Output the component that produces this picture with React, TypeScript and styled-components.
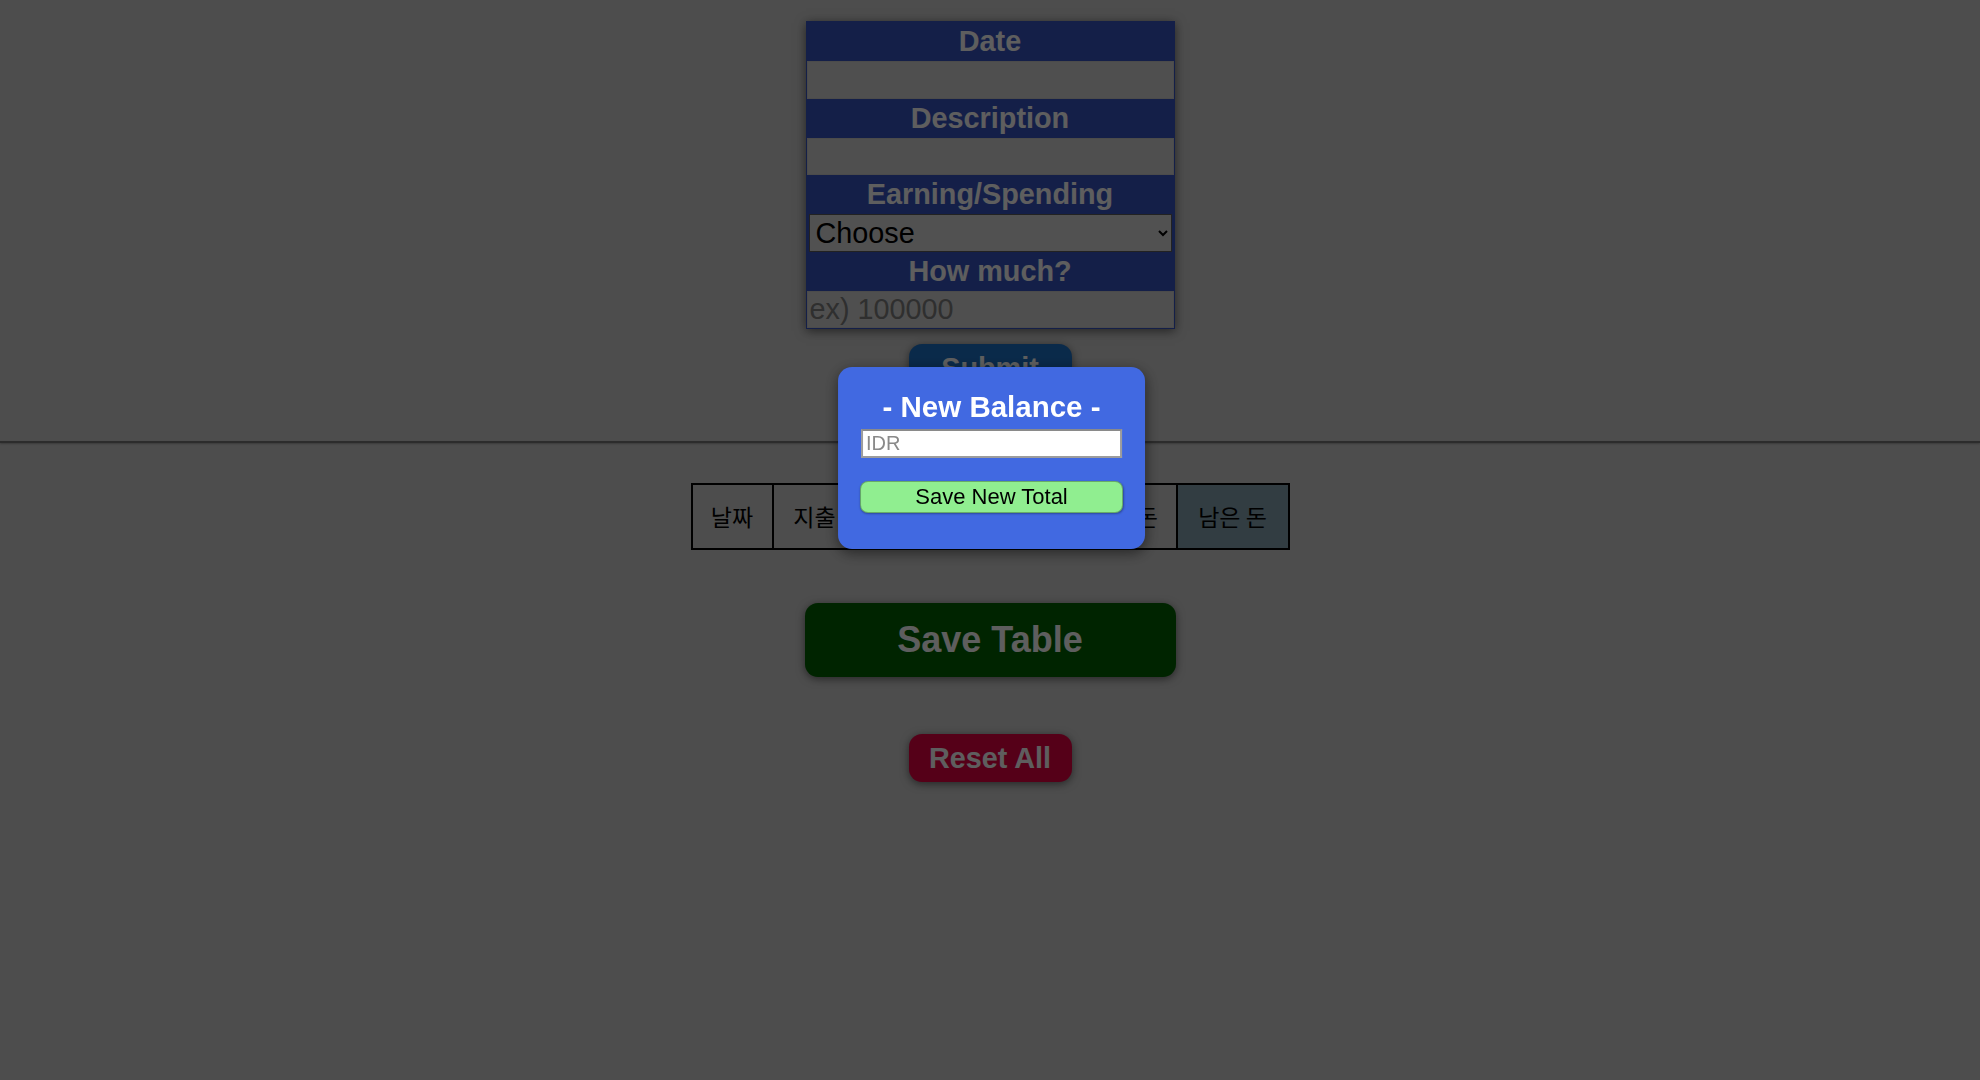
import React from "react";
import styled, { createGlobalStyle } from "styled-components";

const GlobalStyle = createGlobalStyle`
  html, body {
    margin: 0;
    padding: 0;
    background: #c0c0c0;
    font-family: "Liberation Sans", Arial, "Noto Sans CJK KR", sans-serif;
  }
  * { box-sizing: border-box; }
`;

const Page = styled.main`
  display: flex;
  flex-direction: column;
  align-items: center;
  padding-top: 21px;
  min-height: 100vh;
`;

const FormCard = styled.form`
  width: 369px;
  display: flex;
  flex-direction: column;
  border: 1px solid #344eb4;
  background: #344eb4;
  box-shadow: 0 2px 10px rgba(0, 0, 0, 0.55);
`;

const FieldLabel = styled.label`
  display: block;
  height: 39px;
  line-height: 39px;
  text-align: center;
  color: #ececec;
  font-weight: bold;
  font-size: 28.8px;
`;

const TextField = styled.input`
  display: block;
  width: 100%;
  height: 37.5px;
  margin: 0;
  padding: 1px 2px;
  border: 1px solid #bcbcbc;
  background: #c6c6c6;
  font-family: "Liberation Sans", Arial, sans-serif;
  font-size: 28.8px;
  color: #000;
  &::placeholder { color: #757575; }
  outline: none;
`;

const SelectField = styled.select`
  display: block;
  width: calc(100% - 4px);
  height: 37.5px;
  margin: 0 2px;
  padding: 0 2px;
  border: 1px solid #555;
  background: #cacaca;
  font-family: "Liberation Sans", Arial, sans-serif;
  font-size: 28.8px;
  color: #000;
`;

const PillButton = styled.button<{ $bg: string; $w: number; $h: number; $size: number; $mt: number }>`
  width: ${(p) => p.$w}px;
  height: ${(p) => p.$h}px;
  margin-top: ${(p) => p.$mt}px;
  border: none;
  border-radius: 13px;
  background: ${(p) => p.$bg};
  color: #ececec;
  font-family: "Liberation Sans", Arial, sans-serif;
  font-weight: bold;
  font-size: ${(p) => p.$size}px;
  box-shadow: 0 2px 8px rgba(0, 0, 0, 0.5);
  cursor: pointer;
`;

const Divider = styled.hr`
  align-self: stretch;
  width: 100%;
  height: 0;
  margin: 49px 0 0;
  border: 0;
  border-top: 2px solid #6e6e6e;
  box-shadow: 0 1px 2px rgba(0, 0, 0, 0.25);
`;

const LedgerTable = styled.table`
  margin-top: 40px;
  width: 597px;
  table-layout: fixed;
  border-collapse: collapse;
  border: 2px solid #000;
`;

const Col = styled.col<{ $w: number }>`
  width: ${(p) => p.$w}px;
`;

const HeadCell = styled.th<{ $accent?: boolean }>`
  border: 2px solid #000;
  padding: 16px 0;
  line-height: 31px;
  font-family: "Noto Sans CJK KR", "Liberation Sans", sans-serif;
  font-size: 23px;
  font-weight: normal;
  color: #000;
  white-space: nowrap;
  text-align: center;
  background: ${(p) => (p.$accent ? "#7d9aa5" : "transparent")};
`;

const Overlay = styled.div`
  position: fixed;
  inset: 0;
  background: rgba(0, 0, 0, 0.6);
  z-index: 10;
`;

const Modal = styled.div`
  position: fixed;
  top: 367px;
  left: 50%;
  transform: translateX(-49.5%);
  width: 307px;
  padding: 23px 23px 36px;
  background: #4169e1;
  border-radius: 14px;
  box-shadow: 0 4px 14px rgba(0, 0, 0, 0.5);
  z-index: 11;
  display: flex;
  flex-direction: column;
`;

const ModalTitle = styled.h2`
  margin: 0;
  height: 33px;
  line-height: 33px;
  text-align: center;
  color: #ffffff;
  font-size: 29.5px;
  font-weight: bold;
  white-space: nowrap;
`;

const ModalInput = styled.input`
  margin-top: 6px;
  width: 100%;
  height: 29px;
  padding: 1px 3px;
  border: 2px solid #9c9c9c;
  border-top-color: #8a8a8a;
  background: #ffffff;
  font-family: "Liberation Sans", Arial, sans-serif;
  font-size: 20px;
  outline: none;
  &::placeholder { color: #8a8a8a; }
`;

const ModalButton = styled.button`
  margin: 23px -1px 0;
  height: 32px;
  border: 1px solid rgba(0, 0, 0, 0.28);
  border-radius: 8px;
  background: #90ee90;
  color: #000;
  font-family: "Liberation Sans", Arial, sans-serif;
  font-size: 22px;
  box-shadow: 0 1px 2px rgba(0, 0, 0, 0.3);
  cursor: pointer;
`;

const columns: { label: string; w: number; accent?: boolean }[] = [
  { label: "날짜", w: 81 },
  { label: "지출", w: 84 },
  { label: "내용", w: 84 },
  { label: "나간 돈", w: 109 },
  { label: "들어온 돈", w: 127 },
  { label: "남은 돈", w: 112, accent: true },
];

export default function App() {
  return (
    <>
      <GlobalStyle />
      <Page>
        <FormCard onSubmit={(e) => e.preventDefault()}>
          <FieldLabel htmlFor="date">Date</FieldLabel>
          <TextField id="date" type="text" />
          <FieldLabel htmlFor="desc">Description</FieldLabel>
          <TextField id="desc" type="text" />
          <FieldLabel htmlFor="kind">Earning/Spending</FieldLabel>
          <SelectField id="kind" defaultValue="choose">
            <option value="choose">Choose</option>
            <option value="earning">Earning</option>
            <option value="spending">Spending</option>
          </SelectField>
          <FieldLabel htmlFor="amount">How much?</FieldLabel>
          <TextField id="amount" type="text" placeholder="ex) 100000" />
        </FormCard>
        <PillButton $bg="#1a69b8" $w={163} $h={48} $size={28.8} $mt={15}>
          Submit
        </PillButton>
        <Divider />
        <LedgerTable>
          <colgroup>
            {columns.map((c) => (
              <Col key={c.label} $w={c.w} />
            ))}
          </colgroup>
          <thead>
            <tr>
              {columns.map((c) => (
                <HeadCell key={c.label} $accent={c.accent}>
                  {c.label}
                </HeadCell>
              ))}
            </tr>
          </thead>
        </LedgerTable>
        <PillButton $bg="#005a00" $w={371} $h={74} $size={36} $mt={53}>
          Save Table
        </PillButton>
        <PillButton $bg="#d4003e" $w={163} $h={48} $size={28.8} $mt={57}>
          Reset All
        </PillButton>
      </Page>
      <Overlay />
      <Modal>
        <ModalTitle>- New Balance -</ModalTitle>
        <ModalInput type="text" placeholder="IDR" />
        <ModalButton type="button">Save New Total</ModalButton>
      </Modal>
    </>
  );
}
